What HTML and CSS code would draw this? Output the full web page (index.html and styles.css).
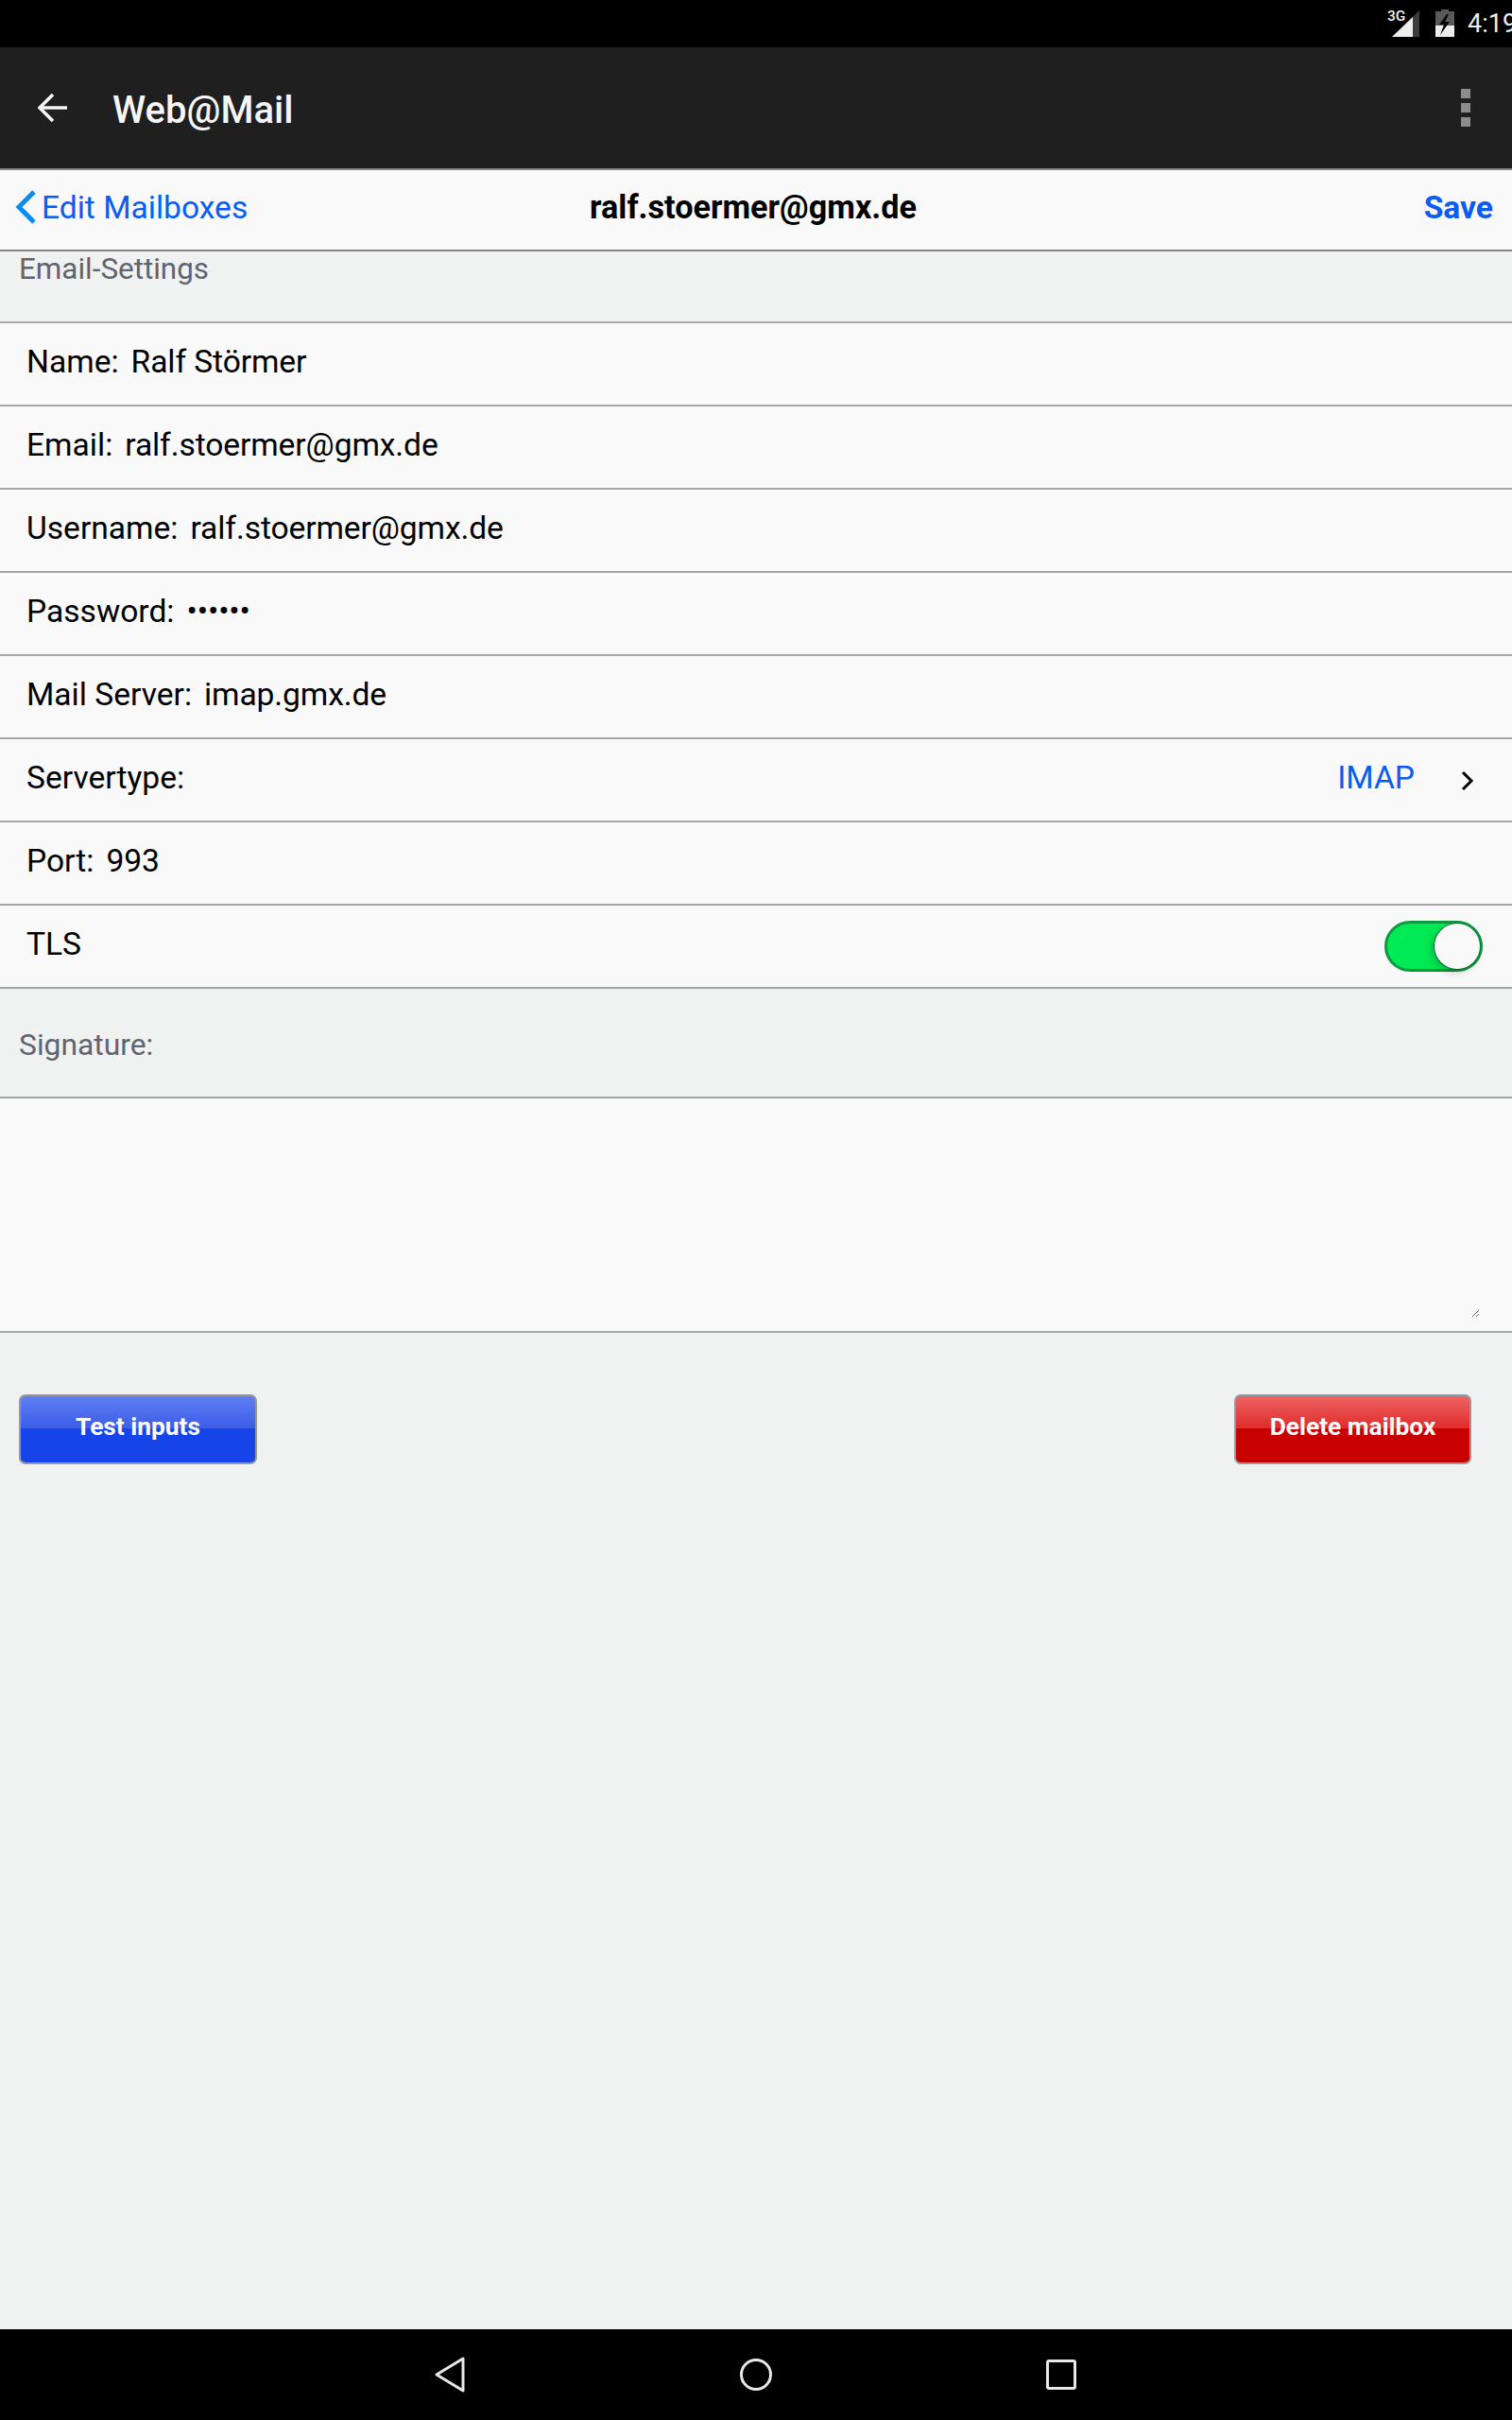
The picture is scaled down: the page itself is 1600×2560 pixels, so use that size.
FILE: index.html
```html
<!DOCTYPE html>
<html lang="en">
<head>
<meta charset="utf-8">
<title>Web@Mail</title>
<link rel="stylesheet" href="styles.css">
</head>
<body>
<div class="app">
  <div class="status">
    <span class="net">3G</span>
    <svg class="signal" width="30" height="29" viewBox="0 0 30 29"><path d="M0 28 L29 0 V28 Z" fill="#3c3c3c"/><path d="M0 28 L22 7 V28 Z" fill="#eeeeee"/></svg>
    <svg class="battery" width="20" height="29" viewBox="0 0 20 29"><path d="M6 0 H14 V2 H20 V29 H0 V2 H6 Z" fill="#5a5a5a"/><path d="M0 17 H20 V29 H0 Z" fill="#eeeeee"/><path d="M12 5 L4 16 H9 L5 27 L15 13 H10 L14 5 Z" fill="#000"/></svg>
    <span class="time">4:19</span>
  </div>
  <header class="toolbar">
    <svg class="back" width="32" height="32" viewBox="0 0 32 32"><path d="M31 16 H3 M16 2 L2 16 L16 30" fill="none" stroke="#f5f5f5" stroke-width="3.5"/></svg>
    <h1 class="app-title">Web@Mail</h1>
    <div class="overflow"><i></i><i></i><i></i></div>
  </header>
  <nav class="navbar">
    <a class="nav-back"><svg width="24" height="36" viewBox="0 0 24 36"><path d="M20 2 L4 18 L20 34" fill="none" stroke="#0a8cf5" stroke-width="5"/></svg><span>Edit Mailboxes</span></a>
    <div class="nav-title">ralf.stoermer@gmx.de</div>
    <a class="nav-save">Save</a>
  </nav>
  <div class="section section-top">Email-Settings</div>
  <div class="rows">
    <div class="row"><span class="label">Name:</span><span class="value">Ralf Störmer</span></div>
    <div class="row"><span class="label">Email:</span><span class="value">ralf.stoermer@gmx.de</span></div>
    <div class="row"><span class="label">Username:</span><span class="value">ralf.stoermer@gmx.de</span></div>
    <div class="row"><span class="label">Password:</span><span class="value">••••••</span></div>
    <div class="row"><span class="label">Mail Server:</span><span class="value">imap.gmx.de</span></div>
    <div class="row"><span class="label">Servertype:</span><span class="row-end"><span class="link">IMAP</span><svg class="chev" width="14" height="22" viewBox="0 0 14 22"><path d="M2 2 L11 11 L2 20" fill="none" stroke="#000" stroke-width="3"/></svg></span></div>
    <div class="row"><span class="label">Port:</span><span class="value">993</span></div>
    <div class="row"><span>TLS</span><span class="toggle"><span class="knob"></span></span></div>
  </div>
  <div class="section section-sig">Signature:</div>
  <div class="sig-box"><textarea class="sig" aria-label="Signature"></textarea></div>
  <div class="actions">
    <button class="btn btn-blue">Test inputs</button>
    <button class="btn btn-red">Delete mailbox</button>
  </div>
  <div class="bottom">
    <svg width="34" height="40" viewBox="0 0 34 40"><path d="M31 3 L3 20 L31 37 Z" fill="none" stroke="#e8e8e8" stroke-width="3" stroke-linejoin="round"/></svg>
    <svg width="36" height="36" viewBox="0 0 36 36"><circle cx="18" cy="18" r="15.5" fill="none" stroke="#e8e8e8" stroke-width="3"/></svg>
    <svg width="32" height="32" viewBox="0 0 32 32"><rect x="1.5" y="1.5" width="29" height="29" rx="1.5" fill="none" stroke="#e8e8e8" stroke-width="3"/></svg>
  </div>
</div>
</body>
</html>
```
FILE: styles.css
```css
* { box-sizing: border-box; }
html, body { margin: 0; padding: 0; }
body { width: 1600px; height: 2560px; overflow: hidden; font-family: Roboto, "Liberation Sans", sans-serif; background: #f0f2f2; color: #000; }
.app { width: 1600px; height: 2560px; display: flex; flex-direction: column; overflow: hidden; }

.status { height: 50px; background: #000; display: flex; align-items: flex-start; justify-content: flex-end; position: relative; flex: none; }
.net { position: absolute; left: 1468px; top: 10px; font-size: 15.5px; font-weight: 500; color: #eee; line-height: 15px; }
.signal { margin-top: 11px; margin-right: 16px; }
.battery { margin-top: 10px; margin-right: 14px; }
.time { width: 47px; white-space: nowrap; font-size: 27px; line-height: 32px; margin-top: 9px; color: #eeeeee; }

.toolbar { height: 130px; flex: none; background: #1f1f1f; border-bottom: 2px solid #858585; display: flex; align-items: center; padding-left: 40px; padding-right: 44px; }
.back { flex: none; }
.app-title { margin: 6px 0 0 47px; font-size: 40px; font-weight: 500; color: #f5f5f5; flex: 1; line-height: 44px; }
.overflow { display: flex; flex-direction: column; gap: 5px; }
.overflow i { width: 10px; height: 10px; background: #8c8c8c; display: block; }

.navbar { height: 86px; flex: none; background: #f9f9f9; border-bottom: 2px solid #858585; display: flex; align-items: center; justify-content: space-between; padding: 0 20px 6px 16px; position: relative; }
.nav-back { display: flex; align-items: center; gap: 4px; font-size: 33.6px; color: #0a5cf5; }
.nav-title { position: absolute; left: -6px; right: 0; text-align: center; font-size: 34.2px; font-weight: 700; pointer-events: none; }
.nav-save { font-size: 33.6px; font-weight: 700; color: #0a5cf5; }

.section { flex: none; background: #f0f2f2; color: #5f6470; font-size: 31.8px; padding-left: 20px; border-bottom: 2px solid #a6a6a6; }
.section-top { height: 76px; line-height: 38px; font-size: 31.4px; }
.section-sig { height: 116px; line-height: 118px; }

.row { height: 88px; background: #f9f9f9; border-bottom: 2px solid #a6a6a6; display: flex; align-items: center; justify-content: space-between; padding: 0 30px 6px 28px; font-size: 33.6px; }
.label { flex: none; margin-right: 13px; }
.value { flex: 1; letter-spacing: -0.1px; }
.row-end { display: flex; align-items: center; gap: 49px; margin-right: 10px; }
.link { color: #0a5cf5; }
.chev { margin-top: 7px; }
.toggle { width: 104px; height: 54px; border-radius: 27px; background: #00ea55; border: 3px solid #0a9a40; display: block; position: relative; margin-right: 1px; margin-top: 6px; }
.knob { position: absolute; right: 0; top: 0; width: 48px; height: 48px; border-radius: 50%; background: #f9f9f9; box-shadow: -3px 3px 8px rgba(0, 0, 0, 0.22), 0 0 0 1px #0a7a35; }

.sig-box { height: 248px; flex: none; background: #f9f9f9; border-bottom: 2px solid #a6a6a6; padding: 0 34px 14px 0; }
.sig { display: block; width: 100%; height: 100%; border: 0; outline: 0; background: transparent; resize: both; padding: 0; margin: 0; }

.actions { flex: 1; display: flex; justify-content: space-between; align-items: flex-start; padding: 65px 43px 0 20px; }
.btn { height: 74px; border: 2px solid #95989c; border-radius: 7px; color: #fbfbfb; font: 700 26.3px Roboto, "Liberation Sans", sans-serif; padding: 0 0 6px; }
.btn-blue { width: 252px; background: linear-gradient(#5f80f3 0%, #3c5ce8 49%, #1644e8 49%, #1644e8 100%); }
.btn-red { width: 251px; background: linear-gradient(#ee6464 0%, #e02a2a 49%, #c80000 49%, #c80000 100%); }

.bottom { height: 96px; flex: none; background: #000; display: flex; align-items: center; justify-content: center; gap: 289px; padding-right: 3px; }
```
